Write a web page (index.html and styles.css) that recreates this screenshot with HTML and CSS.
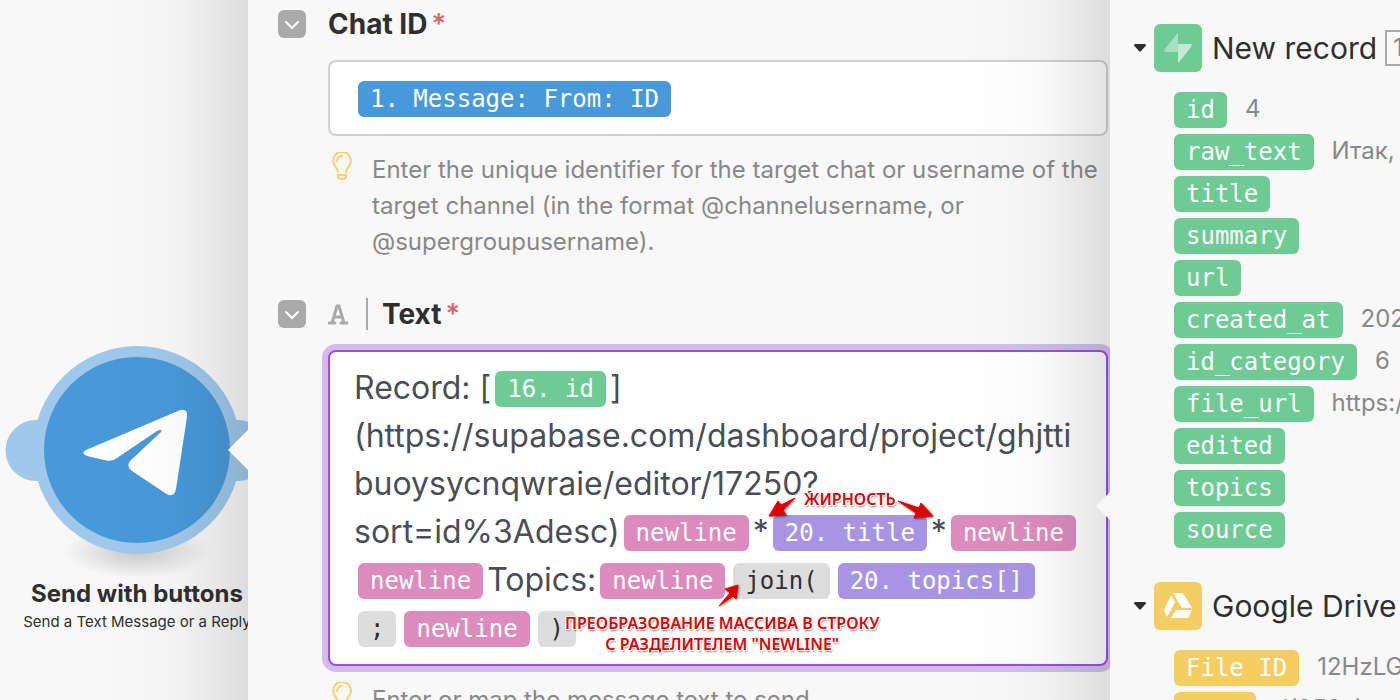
FILE: index.html
```html
<!DOCTYPE html>
<html lang="en">
<head>
    <meta charset="UTF-8">
    <meta name="viewport" content="width=device-width, initial-scale=1.0">
    <title>Send with buttons</title>
    <link rel="stylesheet" href="styles.css">
</head>
<body>
    <div class="workspace">
        <section class="canvas">
            <div class="module">
                <svg class="module-icon" viewBox="0 0 274 240" aria-hidden="true">
                    <defs>
                        <radialGradient id="ground">
                            <stop offset="0" stop-color="#000" stop-opacity=".2"/>
                            <stop offset="1" stop-color="#000" stop-opacity="0"/>
                        </radialGradient>
                    </defs>
                    <ellipse cx="137" cy="213" rx="74" ry="27" fill="url(#ground)"/>
                    <path d="M44 82H36a30 30 0 0 0 0 61h8zM230 82h8a30 30 0 0 1 0 61h-8z" fill="#9fc8ea"/>
                    <circle cx="137" cy="112" r="104" fill="#9fc8ea"/>
                    <circle cx="137" cy="112" r="93" fill="#4899d9"/>
                    <path d="M86 112L178 73Q188 69 187 79L176 151Q174 161 165 155L132 133Q126 128 130 123L161 94Q163 90 157 93L117 120Q112 124 104 122L87 118Q80 115 86 112z" fill="#fff"/>
                </svg>
                <h2 class="module-title">Send with buttons</h2>
                <p class="module-subtitle">Send a Text Message or a Reply</p>
            </div>
        </section>

        <main class="dialog">
            <div class="dialog-body">
                <div class="field-head">
                    <button class="toggle" type="button" aria-label="Collapse Chat ID">
                        <svg viewBox="0 0 28 28"><path d="M8 12l6 6 6-6"/></svg>
                    </button>
                    <span class="label" id="chatLabel">Chat ID<span class="required">*</span></span>
                </div>
                <div class="field">
                    <div class="input" role="textbox" contenteditable="true" spellcheck="false" aria-labelledby="chatLabel"><span class="chip blue">1. Message: From: ID</span></div>
                    <div class="hint">
                        <svg class="bulb" viewBox="0 0 20 28"><path d="M6 20C6 16 1 14 1 9a9 9 0 0 1 18 0c0 5-5 7-5 11M5 9a5 5 0 0 1 5-5M6 23h8v1c0 4-8 4-8 0z"/></svg>
                        <p>Enter the unique identifier for the target chat or username of the target channel (in the format @channelusername, or @supergroupusername).</p>
                    </div>
                </div>

                <div class="field-head">
                    <button class="toggle" type="button" aria-label="Collapse Text">
                        <svg viewBox="0 0 28 28"><path d="M8 12l6 6 6-6"/></svg>
                    </button>
                    <svg class="type-icon" viewBox="0 0 20 22"><path d="M4 20L9 3h2l5 17M6 14h8M1 20h6M13 20h6"/></svg>
                    <span class="divider"></span>
                    <span class="label" id="textLabel">Text<span class="required">*</span></span>
                </div>
                <div class="field">
                    <div class="editor-wrap">
                        <div class="editor" role="textbox" aria-multiline="true" contenteditable="true" spellcheck="false" aria-labelledby="textLabel">Record: [<span class="chip green">16. id</span>]<br>(https://supabase.com/dashboard/project/ghjtti<br>buoysycnqwraie/editor/17250?<br>sort=id%3Adesc)<span class="chip pink">newline</span>*<span class="chip violet">20. title</span>*<span class="chip pink">newline</span><br><span class="chip pink">newline</span>Topics:<span class="chip pink">newline</span><span class="chip gray">join(</span><span class="chip violet">20. topics[]</span><br><span class="chip gray">;</span><span class="chip pink">newline</span><span class="chip gray">)</span></div>
                        <div class="note note-bold">ЖИРНОСТЬ</div>
                        <div class="note note-join">ПРЕОБРАЗОВАНИЕ МАССИВА В СТРОКУ<br>С РАЗДЕЛИТЕЛЕМ "NEWLINE"</div>
                        <svg class="arrows" viewBox="0 0 200 120" aria-hidden="true">
                            <path d="M35 8L21 15 18 11 9 26 26 25 23 20Z"/>
                            <path d="M138 11L159 18 161 13 173 26 154 28 156 23Z"/>
                            <path d="M-41 116L-30 103-35 99-22 95-24 109-27 106Z"/>
                        </svg>
                    </div>
                    <div class="hint">
                        <svg class="bulb" viewBox="0 0 20 28"><path d="M6 20C6 16 1 14 1 9a9 9 0 0 1 18 0c0 5-5 7-5 11M5 9a5 5 0 0 1 5-5M6 23h8v1c0 4-8 4-8 0z"/></svg>
                        <p>Enter or map the message text to send.</p>
                    </div>
                </div>
            </div>
        </main>

        <aside class="mapping">
            <div class="mapping-body">
                <div class="group-head">
                    <svg class="caret" viewBox="0 0 12 8"><path d="M1 0h10q1 0 1 1.500L7 7q-1 1-2 0L0 1.500Q0 0 1 0z"/></svg>
                    <svg class="app-icon" viewBox="0 0 48 48">
                        <rect width="48" height="48" rx="6" fill="#6dcb93"/>
                        <path d="M24 10v18H12q-3 0-1-3L22 11q1-2 2-1z" fill="#a7e0be"/>
                        <path d="M24 38V20h12q3 0 1 3L26 37q-1 2-2 1z" fill="#c5ead3"/>
                    </svg>
                    <h2>New record</h2>
                    <span class="badge">16</span>
                </div>
                <ul class="items">
                    <li><span class="chip green">id</span><span>4</span></li>
                    <li><span class="chip green">raw_text</span><span>Итак,</span></li>
                    <li><span class="chip green">title</span></li>
                    <li><span class="chip green">summary</span></li>
                    <li><span class="chip green">url</span></li>
                    <li><span class="chip green">created_at</span><span>2025</span></li>
                    <li><span class="chip green">id_category</span><span>6</span></li>
                    <li><span class="chip green">file_url</span><span>https://</span></li>
                    <li><span class="chip green">edited</span></li>
                    <li><span class="chip green">topics</span></li>
                    <li><span class="chip green">source</span></li>
                </ul>
                <div class="group-head">
                    <svg class="caret" viewBox="0 0 12 8"><path d="M1 0h10q1 0 1 1.500L7 7q-1 1-2 0L0 1.500Q0 0 1 0z"/></svg>
                    <svg class="app-icon" viewBox="0 0 48 48">
                        <rect width="48" height="48" rx="6" fill="#f5ce62"/>
                        <path d="M17 13l4 7-8 15-3-7zM19 11h10l9 15H28zM22 28h16l-4 8H17z" fill="#fff"/>
                    </svg>
                    <h2>Google Drive</h2>
                </div>
                <ul class="items">
                    <li><span class="chip yellow">File ID</span><span>12HzLG</span></li>
                    <li><span class="chip yellow">Data</span><span>d(953a)</span></li>
                </ul>
            </div>
        </aside>
    </div>
</body>
</html>
```

FILE: styles.css
```css
* {
    box-sizing: border-box;
}
body {
    margin: 0;
    background-color: #f8f8f8;
    color: #2f2f2f;
    font-family: Inter, sans-serif;
}
h2, p, ul {
    margin: 0;
    padding: 0;
}
.workspace {
    display: flex;
    height: 100vh;
    overflow: hidden;
}
.canvas, .dialog, .mapping {
    position: relative;
    min-width: 0;
    background-color: #f8f8f8;
}
.canvas {
    flex: 0 0 248px;
    display: flex;
    align-items: flex-end;
}
.module {
    flex: 0 0 274px;
    padding-bottom: 66px;
    text-align: center;
    white-space: nowrap;
}
.module-icon {
    display: block;
    width: 274px;
    height: 240px;
}
.module-title {
    font-size: 24px;
    line-height: 32px;
    font-weight: 700;
}
.module-subtitle {
    font-size: 15px;
    line-height: 24px;
}

/* shadow cast by the panel on the right */
.canvas::after, .dialog::after {
    content: "";
    position: absolute;
    top: 0;
    right: 0;
    width: 150px;
    height: 100%;
    background: linear-gradient(to right, rgba(0,0,0,0), rgba(0,0,0,.012) 40%, rgba(0,0,0,.025) 55%, rgba(0,0,0,.05) 70%, rgba(0,0,0,.08) 85%, rgba(0,0,0,.11));
    pointer-events: none;
}
/* pointer of the panel */
.dialog::before, .mapping::before {
    content: "";
    position: absolute;
    right: 100%;
    z-index: 2;
    background-color: #f8f8f8;
    clip-path: polygon(100% 0, 100% 100%, 0 50%);
}
.dialog::before {
    top: 430px;
    width: 20px;
    height: 40px;
}
.mapping::before {
    top: 492px;
    width: 14px;
    height: 28px;
}

.dialog {
    flex: 1;
}
.dialog-body {
    height: 100%;
    overflow: hidden;
    padding: 4px 2px 0 30px;
}
.field-head {
    display: flex;
    align-items: center;
    height: 40px;
}
.toggle {
    width: 28px;
    height: 28px;
    margin-right: 22px;
    padding: 0;
    border: none;
    border-radius: 6px;
    background-color: #aaa;
    cursor: pointer;
}
.toggle svg {
    display: block;
    fill: none;
    stroke: #fff;
    stroke-width: 2;
    stroke-linecap: round;
}
.type-icon {
    width: 20px;
    height: 22px;
    fill: none;
    stroke: #aaa;
    stroke-width: 3;
    stroke-linecap: round;
    stroke-linejoin: round;
}
.divider {
    width: 2px;
    height: 32px;
    margin: 0 14px 0 18px;
    background-color: #aaa;
}
.label {
    font-size: 28px;
    line-height: 38px;
    font-weight: 700;
}
.required {
    margin-left: 4px;
    color: #e0616c;
    font-weight: 500;
}
.field {
    padding: 16px 0 34px 50px;
}
.chip {
    display: inline-block;
    padding: 0 12px;
    border-radius: 6px;
    color: #fff;
    font-family: "DejaVu Sans Mono", monospace;
    font-size: 24px;
    line-height: 36px;
    white-space: nowrap;
}
.blue { background-color: #4899d9; }
.green { background-color: #6dcb93; }
.pink { background-color: #dc8cbc; }
.violet { background-color: #a795e4; }
.yellow { background-color: #f5ce62; }
.gray { background-color: #ddd; color: #2f2f2f; }

.input {
    padding: 19px 28px 17px;
    border: 2px solid #d0d0d0;
    border-radius: 8px;
    background-color: #fff;
    line-height: 0;
}
.hint {
    display: flex;
    gap: 20px;
    padding: 16px 0 0 4px;
    color: #888;
    font-size: 24px;
    line-height: 36px;
}
.bulb {
    flex: 0 0 20px;
    height: 28px;
    fill: none;
    stroke: #f8cf6a;
    stroke-width: 2;
    stroke-linecap: round;
}
.editor-wrap {
    position: relative;
}
.editor {
    padding: 12px 16px 12px 24px;
    border: 2px solid #9b4df0;
    border-radius: 8px;
    box-shadow: 0 0 0 6px #d2bdea;
    background-color: #fff;
    color: #4a4f57;
    font-size: 32px;
    line-height: 48px;
}
.editor .chip {
    margin: 0 4px;
    vertical-align: 2px;
}

.note {
    position: absolute;
    color: #e00000;
    font-family: "Noto Sans", sans-serif;
    font-size: 16px;
    line-height: 21px;
    font-weight: 600;
    text-align: center;
    white-space: nowrap;
    text-shadow: 1px 0 #fff, -1px 0 #fff, 0 1px #fff, 0 -1px #fff, 1px 1px #fff, -1px -1px #fff, 1px -1px #fff, -1px 1px #fff, 1px 2px 2px #777;
}
.note-bold {
    left: 476px;
    top: 139px;
}
.note-join {
    left: 237px;
    top: 263px;
}
.arrows {
    position: absolute;
    left: 432px;
    top: 140px;
    width: 200px;
    height: 120px;
    overflow: visible;
    fill: #e00000;
    stroke: #e00000;
    stroke-linejoin: round;
    filter: drop-shadow(1px 1px 1px rgba(0,0,0,.5));
}

.mapping {
    flex: 0 0 290px;
}
.mapping-body {
    height: 100%;
    overflow: hidden;
    padding: 24px 0 0 24px;
    white-space: nowrap;
}
.group-head {
    display: flex;
    align-items: center;
}
.group-head h2 {
    margin: 0 8px 0 10px;
    font-size: 30px;
    line-height: 48px;
    font-weight: 400;
}
.caret {
    flex: 0 0 12px;
    height: 8px;
    margin-right: 8px;
    fill: #2f2f2f;
}
.app-icon {
    flex: 0 0 48px;
    height: 48px;
}
.badge {
    padding: 0 6px;
    border: 2px solid #aaa;
    color: #888;
    font-size: 24px;
    line-height: 32px;
}
.items {
    display: flex;
    flex-direction: column;
    gap: 6px;
    padding: 20px 0 34px 40px;
    list-style: none;
}
.items li {
    display: flex;
    gap: 18px;
    color: #888;
    font-size: 24px;
    line-height: 34px;
}
```
